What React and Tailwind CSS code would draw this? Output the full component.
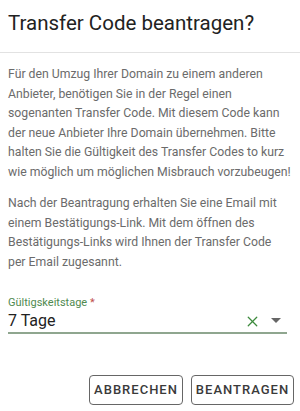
import { X } from 'lucide-react'

export default function App() {
  return (
    <div className="w-[300px] h-[411px] bg-white overflow-hidden font-['Roboto',sans-serif]">
      {/* header */}
      <div className="px-2 pt-[9px] pb-[15px] border-b border-[#e2e2e2]">
        <h1 className="text-[20.5px] leading-[28px] text-[#222]">Transfer Code beantragen?</h1>
      </div>

      {/* body */}
      <div className="px-2 pt-3 text-[12.25px] leading-[19.5px] text-[#6b6b6b]">
        <p>
          Für den Umzug Ihrer Domain zu einem anderen Anbieter, benötigen Sie in der Regel einen
          sogenanten Transfer Code. Mit diesem Code kann der neue Anbieter Ihre Domain übernehmen.
          Bitte halten Sie die Gültigkeit des Transfer Codes to kurz wie möglich um möglichen
          Misbrauch vorzubeugen!
        </p>
        <p className="mt-3 pr-2">
          Nach der Beantragung erhalten Sie eine Email mit einem Bestätigungs-Link. Mit dem öffnen
          des Bestätigungs-Links wird Ihnen der Transfer Code per Email zugesannt.
        </p>
      </div>

      {/* select field */}
      <div className="mx-2 mt-6 w-[279px]">
        <div className="text-[11px] leading-[14px] text-[#4f8a4f]">
          Gültigskeitstage <span className="text-[#c0504d]">*</span>
        </div>
        <div className="flex items-center h-[24px] border-b-2 border-[#8fa68f]">
          <span className="flex-1 text-[16px] text-[#222]">7 Tage</span>
          <X size={17} strokeWidth={1.8} className="text-[#3d8a3d] mr-[10px]" />
          <svg width="10" height="6" viewBox="0 0 10 6" className="mr-[6px]">
            <path d="M0 0 L10 0 L5 5 Z" fill="#666" />
          </svg>
        </div>
      </div>

      {/* actions */}
      <div className="flex justify-end gap-2 pr-[6px] mt-[41px]">
        <button className="h-[30px] w-[94px] border border-[#666] rounded-[4px] text-[13px] font-medium tracking-[1px] text-[#3a3a3a]">
          ABBRECHEN
        </button>
        <button className="h-[30px] w-[103px] border border-[#666] rounded-[4px] text-[13px] font-medium tracking-[1px] text-[#3a3a3a]">
          BEANTRAGEN
        </button>
      </div>
    </div>
  )
}
